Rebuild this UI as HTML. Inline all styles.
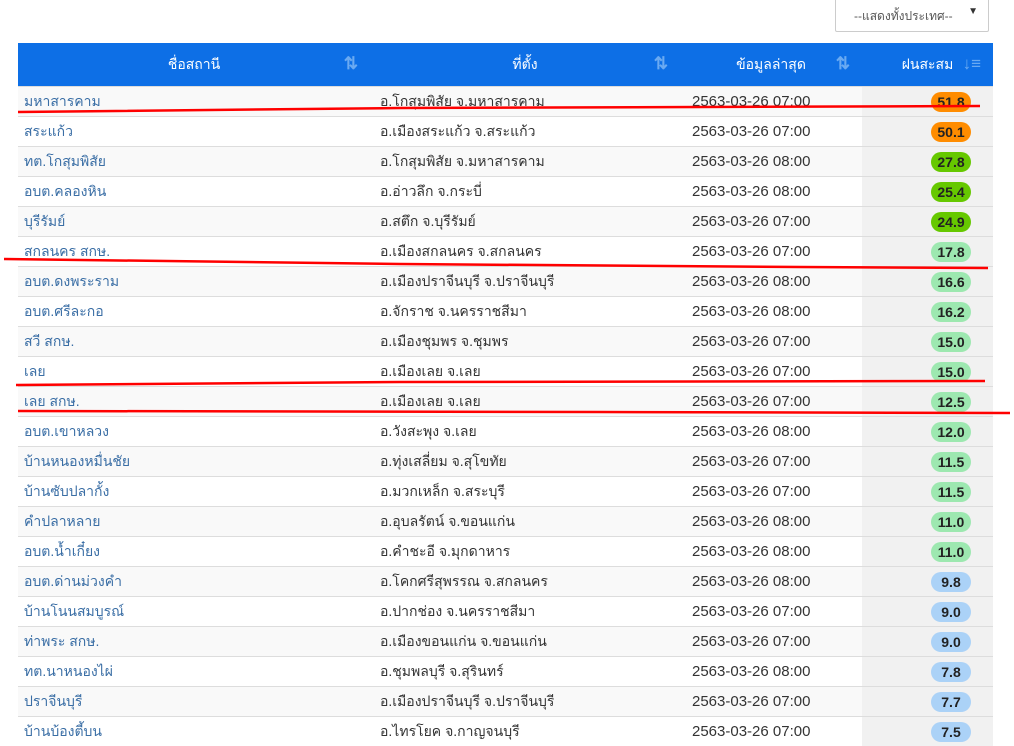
<!DOCTYPE html><html><head><meta charset="utf-8"><style>
body{margin:0;background:#fff;font-family:"Liberation Sans",sans-serif;font-size:14px;color:#333;width:1014px;height:741px;overflow:hidden;position:relative}
.sel{position:absolute;left:835px;top:-2px;width:152px;height:32px;border:1px solid #ccc;border-radius:2px;font-size:12px;color:#555}
.sel span{position:absolute;left:18px;top:8px}.sel b{position:absolute;right:10px;top:7px;font-size:10px;color:#333}
table{position:absolute;left:18px;top:43px;width:975px;border-collapse:collapse;table-layout:fixed}
th{background:#0d6fe6;color:#fff;font-weight:normal;height:41px;font-size:14px;position:relative}
th i{position:absolute;right:12px;top:11px;font-style:normal;color:#6aaaf2;font-size:17px;font-weight:bold}
td{height:29px;border-top:1px solid #ddd;padding:0;white-space:nowrap;overflow:hidden}
tr:nth-child(odd) td{background:#f9f9f9}
tr td:nth-child(4){background:#f1f1f1!important;text-align:right;padding-right:22px}
td a{color:#3a6ea5;padding-left:6px}
td:nth-child(2){padding-left:10px}td:nth-child(3){padding-left:12px;font-size:15px}
.b{display:inline-block;width:40px;height:20px;line-height:20px;border-radius:10px;text-align:center;font-size:14px;font-weight:bold;color:#222}
.o{background:#ff8c00}.g{background:#66c800}.l{background:#9de8b0}.u{background:#abd2f7}
svg{position:absolute;left:0;top:0}
</style></head><body>
<div class="sel"><span>--แสดงทั้งประเทศ--</span><b>▼</b></div>
<table>
<colgroup><col style="width:352px"><col style="width:310px"><col style="width:182px"><col></colgroup>
<tr><th>ชื่อสถานี<i>⇅</i></th><th>ที่ตั้ง<i>⇅</i></th><th>ข้อมูลล่าสุด<i>⇅</i></th><th>ฝนสะสม<i>↓≡</i></th></tr>
<tbody>
<tr><td><a>มหาสารคาม</a></td><td>อ.โกสุมพิสัย จ.มหาสารคาม</td><td>2563-03-26 07:00</td><td><span class="b o">51.8</span></td></tr>
<tr><td><a>สระแก้ว</a></td><td>อ.เมืองสระแก้ว จ.สระแก้ว</td><td>2563-03-26 07:00</td><td><span class="b o">50.1</span></td></tr>
<tr><td><a>ทต.โกสุมพิสัย</a></td><td>อ.โกสุมพิสัย จ.มหาสารคาม</td><td>2563-03-26 08:00</td><td><span class="b g">27.8</span></td></tr>
<tr><td><a>อบต.คลองหิน</a></td><td>อ.อ่าวลึก จ.กระบี่</td><td>2563-03-26 08:00</td><td><span class="b g">25.4</span></td></tr>
<tr><td><a>บุรีรัมย์</a></td><td>อ.สตึก จ.บุรีรัมย์</td><td>2563-03-26 07:00</td><td><span class="b g">24.9</span></td></tr>
<tr><td><a>สกลนคร สกษ.</a></td><td>อ.เมืองสกลนคร จ.สกลนคร</td><td>2563-03-26 07:00</td><td><span class="b l">17.8</span></td></tr>
<tr><td><a>อบต.ดงพระราม</a></td><td>อ.เมืองปราจีนบุรี จ.ปราจีนบุรี</td><td>2563-03-26 08:00</td><td><span class="b l">16.6</span></td></tr>
<tr><td><a>อบต.ศรีละกอ</a></td><td>อ.จักราช จ.นครราชสีมา</td><td>2563-03-26 08:00</td><td><span class="b l">16.2</span></td></tr>
<tr><td><a>สวี สกษ.</a></td><td>อ.เมืองชุมพร จ.ชุมพร</td><td>2563-03-26 07:00</td><td><span class="b l">15.0</span></td></tr>
<tr><td><a>เลย</a></td><td>อ.เมืองเลย จ.เลย</td><td>2563-03-26 07:00</td><td><span class="b l">15.0</span></td></tr>
<tr><td><a>เลย สกษ.</a></td><td>อ.เมืองเลย จ.เลย</td><td>2563-03-26 07:00</td><td><span class="b l">12.5</span></td></tr>
<tr><td><a>อบต.เขาหลวง</a></td><td>อ.วังสะพุง จ.เลย</td><td>2563-03-26 08:00</td><td><span class="b l">12.0</span></td></tr>
<tr><td><a>บ้านหนองหมื่นชัย</a></td><td>อ.ทุ่งเสลี่ยม จ.สุโขทัย</td><td>2563-03-26 07:00</td><td><span class="b l">11.5</span></td></tr>
<tr><td><a>บ้านซับปลากั้ง</a></td><td>อ.มวกเหล็ก จ.สระบุรี</td><td>2563-03-26 07:00</td><td><span class="b l">11.5</span></td></tr>
<tr><td><a>คำปลาหลาย</a></td><td>อ.อุบลรัตน์ จ.ขอนแก่น</td><td>2563-03-26 08:00</td><td><span class="b l">11.0</span></td></tr>
<tr><td><a>อบต.น้ำเกี๋ยง</a></td><td>อ.คำชะอี จ.มุกดาหาร</td><td>2563-03-26 08:00</td><td><span class="b l">11.0</span></td></tr>
<tr><td><a>อบต.ด่านม่วงคำ</a></td><td>อ.โคกศรีสุพรรณ จ.สกลนคร</td><td>2563-03-26 08:00</td><td><span class="b u">9.8</span></td></tr>
<tr><td><a>บ้านโนนสมบูรณ์</a></td><td>อ.ปากช่อง จ.นครราชสีมา</td><td>2563-03-26 07:00</td><td><span class="b u">9.0</span></td></tr>
<tr><td><a>ท่าพระ สกษ.</a></td><td>อ.เมืองขอนแก่น จ.ขอนแก่น</td><td>2563-03-26 07:00</td><td><span class="b u">9.0</span></td></tr>
<tr><td><a>ทต.นาหนองไผ่</a></td><td>อ.ชุมพลบุรี จ.สุรินทร์</td><td>2563-03-26 08:00</td><td><span class="b u">7.8</span></td></tr>
<tr><td><a>ปราจีนบุรี</a></td><td>อ.เมืองปราจีนบุรี จ.ปราจีนบุรี</td><td>2563-03-26 07:00</td><td><span class="b u">7.7</span></td></tr>
<tr><td><a>บ้านบ้องตี้บน</a></td><td>อ.ไทรโยค จ.กาญจนบุรี</td><td>2563-03-26 07:00</td><td><span class="b u">7.5</span></td></tr>
</tbody></table>
<svg width="1014" height="741"><g stroke="#f00" stroke-width="2.5" fill="none">
<path d="M18 112 L400 108 L700 107 L980 106"/>
<path d="M4 259 L400 264 L800 267 L988 268"/>
<path d="M16 385 L400 382 L985 381"/>
<path d="M18 411 L600 412 L1010 413"/></g></svg>
</body></html>
